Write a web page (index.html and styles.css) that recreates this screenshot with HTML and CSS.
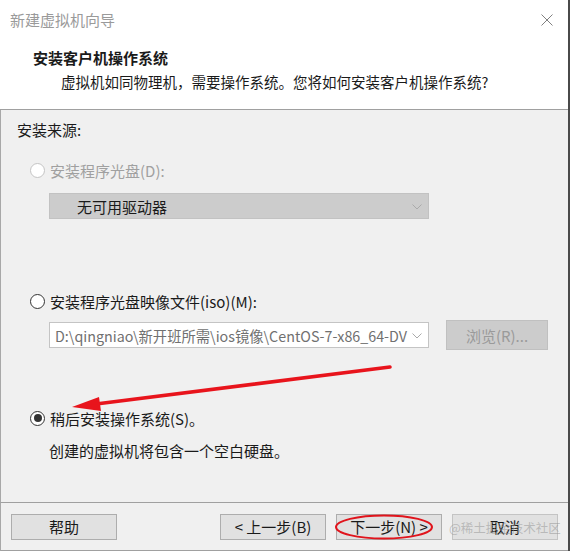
FILE: index.html
```html
<!DOCTYPE html>
<html lang="zh-CN">
<head>
  <meta charset="UTF-8">
  <meta name="viewport" content="width=device-width, initial-scale=1.0">
  <title>新建虚拟机向导</title>
  <link rel="stylesheet" href="styles.css">
</head>
<body>
  <div class="window">
    <!-- 标题栏 -->
    <div class="titlebar">
      <span class="title">新建虚拟机向导</span>
      <svg class="close" width="12" height="12" viewBox="0 0 12 12">
        <path d="M0.5 0.5 L11.5 11.5 M11.5 0.5 L0.5 11.5" stroke="#808080" stroke-width="1" fill="none"/>
      </svg>
    </div>

    <!-- 页头 -->
    <div class="header">
      <h1>安装客户机操作系统</h1>
      <p class="sub">虚拟机如同物理机，需要操作系统。您将如何安装客户机操作系统?</p>
    </div>

    <!-- 内容 -->
    <div class="content">
      <div class="label">安装来源:</div>

      <div class="option disabled first">
        <span class="radio"></span>
        <span>安装程序光盘(D):</span>
      </div>
      <div class="select disabled">
        <span class="select-text">无可用驱动器</span>
        <svg class="chev" width="10" height="6" viewBox="0 0 10 6"><path d="M0.5 0.5 L5 5 L9.5 0.5" stroke="#aaa" fill="none"/></svg>
      </div>

      <div class="option second">
        <span class="radio"></span>
        <span>安装程序光盘映像文件(iso)(M):</span>
      </div>
      <div class="iso-row">
        <div class="select iso">
          <span class="select-text">D:\qingniao\新开班所需\ios镜像\CentOS-7-x86_64-DV</span>
          <svg class="chev" width="10" height="6" viewBox="0 0 10 6"><path d="M0.5 0.5 L5 5 L9.5 0.5" stroke="#aaa" fill="none"/></svg>
        </div>
        <button type="button" class="btn browse">浏览(R)...</button>
      </div>

      <div class="option third">
        <span class="radio checked"></span>
        <span>稍后安装操作系统(S)。</span>
      </div>
      <p class="desc">创建的虚拟机将包含一个空白硬盘。</p>
    </div>

    <!-- 底部按钮 -->
    <div class="footer">
      <button type="button" class="btn">帮助</button>
      <div class="nav">
        <button type="button" class="btn">&lt; 上一步(B)</button>
        <button type="button" class="btn">下一步(N) &gt;</button>
        <button type="button" class="btn cancel">取消</button>
      </div>
    </div>

    <!-- 标注 -->
    <svg class="marks" width="570" height="551" viewBox="0 0 570 551">
      <path d="M390 367 L96 404" stroke="#e8141c" stroke-width="3.5" stroke-linecap="round" fill="none"/>
      <path d="M72 407 L99 397 L101 411 Z" fill="#e8141c"/>
      <ellipse cx="384" cy="527" rx="48" ry="11.5" stroke="#e0141c" stroke-width="2" fill="none"/>
    </svg>
    <span class="watermark">@稀土掘金技术社区</span>
  </div>
</body>
</html>
```

FILE: styles.css
```css
*{
  margin: 0; padding: 0;
  box-sizing: border-box;
}

body{
  font-family: "Noto Sans CJK SC", "Liberation Sans", sans-serif;
  font-size: 15px;
  color: #1a1a1a;
  background: #fff;
}

.window{
  width: 570px; height: 551px;
  display: flex; flex-direction: column;
  position: relative;
  border-right: 2px solid #4a4a4a;
  background: #fff;
  overflow: hidden;
}

/* 标题栏 */
.titlebar{
  height: 38px;
  display: flex; align-items: center;
  justify-content: space-between;
  padding: 0 15px 0 10px;
}
.title{
  color: #9a9a9a;
  font-size: 15px;
}
.close{
  margin-top: 1px;
}

/* 页头 */
.header{
  height: 72px;
  padding: 9px 0 0 33px;
  border-bottom: 1px solid #a0a0a0;
}
.header h1{
  font-size: 15px; font-weight: bold;
  line-height: 22px;
}
.header .sub{
  font-size: 14.5px;
  line-height: 22px;
  margin: 2px 0 0 28px;
}

/* 内容 */
.content{
  flex: 1;
  background: #f0f0f0;
  border-left: 1px solid #a8a8a8;
  padding: 10px 0 0 16px;
}
.label{
  line-height: 20px;
}
.option{
  display: flex; align-items: center;
  height: 20px;
  margin-left: 13px;
  gap: 5px;
}
.option.first{ margin-top: 20px; }
.option.second{ margin-top: 72px; }
.option.third{ margin-top: 58px; }
.option.disabled{ color: #a0a0a0; }

.radio{
  width: 15px; height: 15px;
  border: 1px solid #333;
  border-radius: 50%;
  background: #fff;
  display: flex; align-items: center; justify-content: center;
}
.disabled .radio{
  border-color: #c4c4c4;
}
.radio.checked::after{
  content: "";
  width: 8px; height: 8px;
  border-radius: 50%;
  background: #333;
}

.select{
  width: 380px; height: 26px;
  margin-left: 32px;
  display: flex; align-items: center;
  position: relative;
  border: 1px solid #c4c4c4;
  background: #fff;
}
.select.disabled{
  margin-top: 13px;
  background: #cccccc;
  border-color: #c2c2c2;
}
.select.disabled .select-text{
  padding-left: 27px;
  color: #1a1a1a;
}
.select-text{
  padding-left: 5px;
  white-space: nowrap;
  color: #707070;
}
.iso .select-text{
  font-size: 14.3px;
}
.chev{
  position: absolute;
  right: 6px; top: 10px;
}

.iso-row{
  display: flex; align-items: center;
  margin-top: 9px;
  gap: 17px;
}

.desc{
  margin: 13px 0 0 32px;
  line-height: 20px;
}

/* 底部 */
.footer{
  height: 49px;
  display: flex; align-items: center;
  padding: 0 10px;
  background: #f0f0f0;
  border-top: 1px solid #a0a0a0;
  border-left: 1px solid #a8a8a8;
  border-bottom: 1px solid #a0a0a0;
}
.nav{
  margin-left: auto;
  display: flex; gap: 10px;
}
.btn{
  width: 106px; height: 26px;
  padding: 0;
  font-family: inherit; font-size: 15px;
  color: #1a1a1a;
  background: #e1e1e1;
  border: 1px solid #adadad;
}
.btn.cancel{
  border-color: #c4c4c4;
}
.btn.browse{
  width: 102px; height: 30px;
  background: #cccccc;
  border-color: #c0c0c0;
  color: #9a9a9a;
}

/* 标注 */
.marks{
  position: absolute;
  top: 0; left: 0;
  pointer-events: none;
}
.watermark{
  position: absolute;
  left: 449px; top: 518px;
  font-size: 12.5px;
  white-space: nowrap;
  color: rgba(150, 150, 150, 0.55);
  pointer-events: none;
}
```
